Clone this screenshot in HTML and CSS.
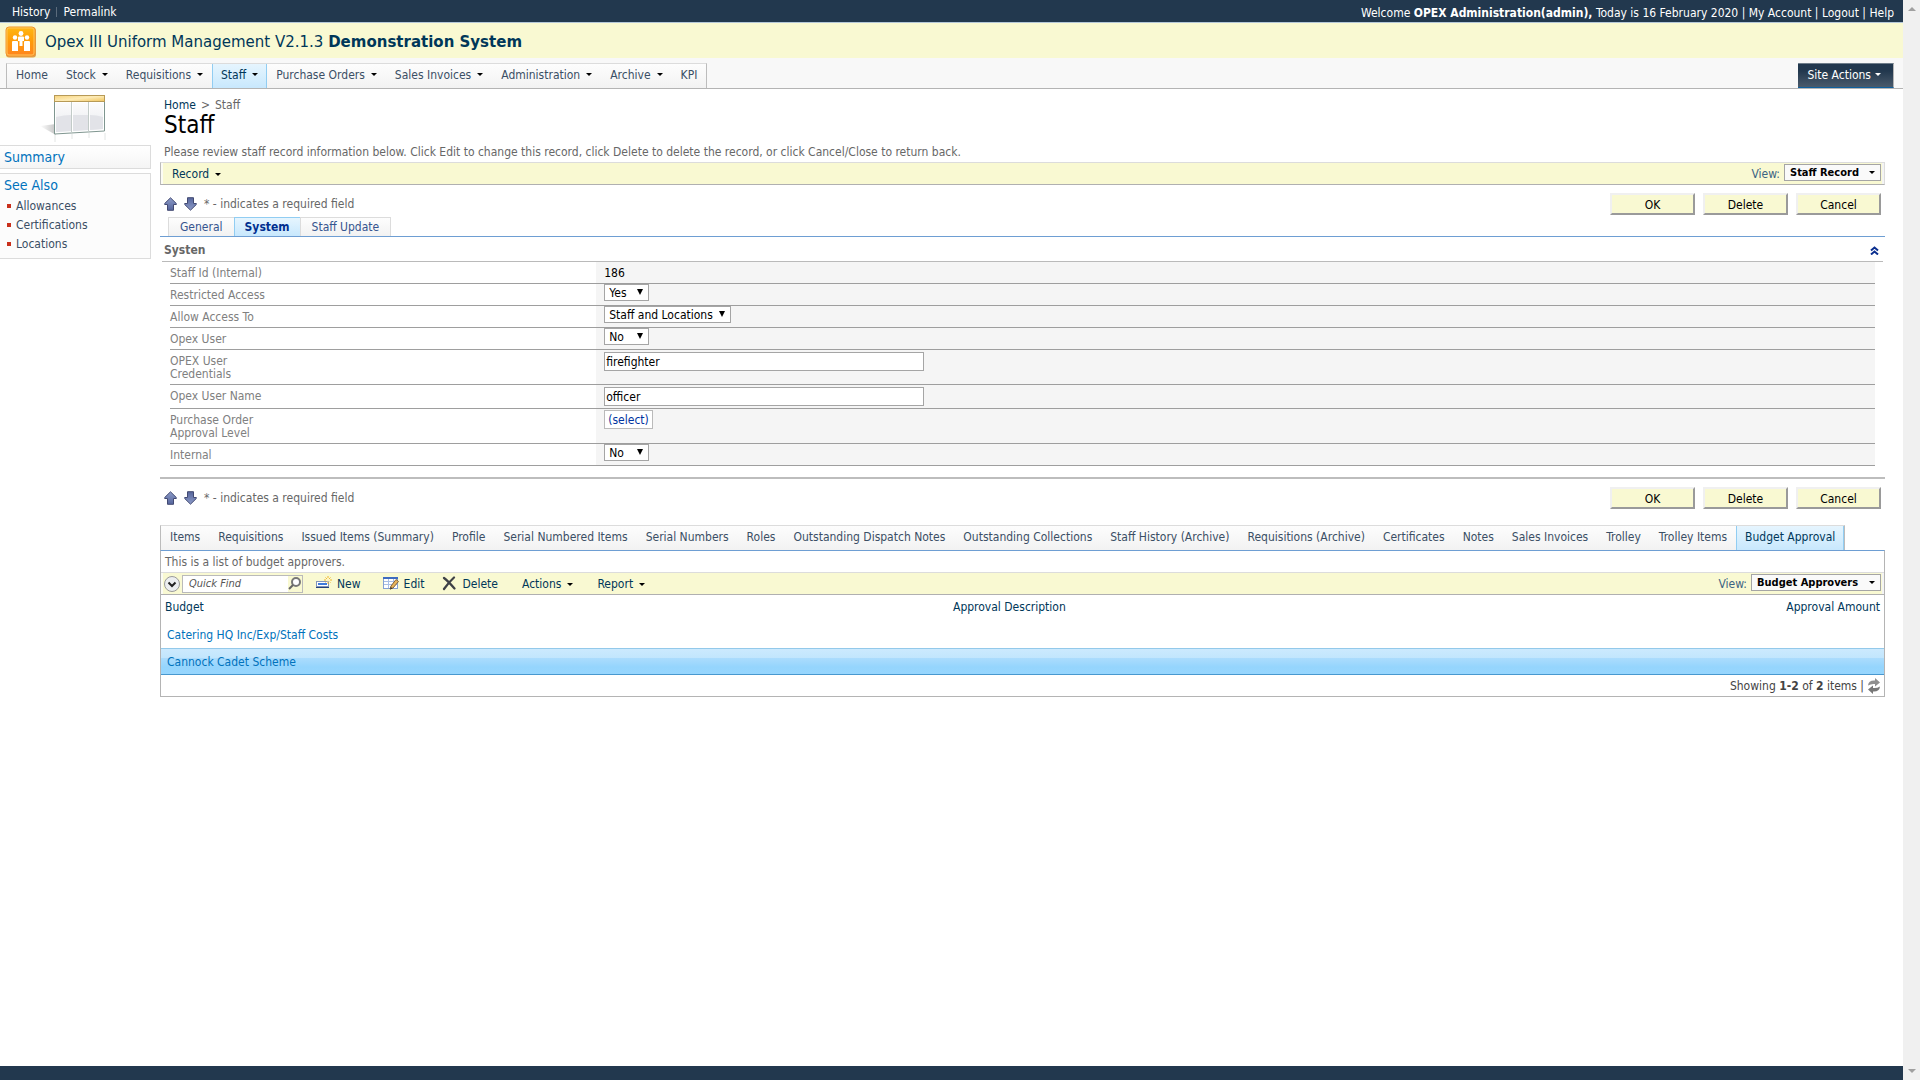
FILE: index.html
```html
<!DOCTYPE html>
<html lang="en">
<head>
    <meta charset="UTF-8">
    <meta name="viewport" content="width=device-width, initial-scale=1.0">
    <title>Staff - Opex III Uniform Management</title>
    <link rel="stylesheet" href="styles.css">
</head>
<body>

    <!-- Shared icons -->
    <svg class="defs" width="0" height="0">
        <defs>
            <linearGradient id="arrowFill" x1="0" y1="0" x2="0" y2="1">
                <stop offset="0" stop-color="#8c9bc8"/>
                <stop offset="1" stop-color="#56659c"/>
            </linearGradient>
            <symbol id="arrow" viewBox="0 0 14 14">
                <path d="M6.500 0.800 L12.300 6.500 V7.500 H9.500 V13.300 H3.500 V7.500 H0.700 V6.500 Z" fill="url(#arrowFill)" stroke="#434a72"/>
            </symbol>
        </defs>
    </svg>

    <div class="page">
        <div class="top-bar">
            <div class="top-left">
                <a href="#">History</a><span class="divider"></span><a href="#">Permalink</a>
            </div>
            <div class="top-right">
                Welcome <b>OPEX Administration(admin),</b> Today is 16 February 2020 | <a href="#">My Account</a> | <a href="#">Logout</a> | <a href="#">Help</a>
            </div>
        </div>

        <header class="header">
            <svg class="logo" width="32" height="32" viewBox="0 0 32 32">
                <defs>
                    <linearGradient id="logoFill" x1="0" y1="0" x2="0" y2="1">
                        <stop offset="0" stop-color="#ffb813"/>
                        <stop offset="0.5" stop-color="#ff9a08"/>
                        <stop offset="1" stop-color="#ff8420"/>
                    </linearGradient>
                </defs>
                <rect x="1" y="1.500" width="30" height="30" rx="3" fill="#dfa050"/>
                <rect x="1" y="1" width="29" height="29" rx="3" fill="url(#logoFill)" stroke="#f0932c"/>
                <rect x="2" y="2" width="27" height="27" rx="2" fill="none" stroke="#ffc65c"/>
                <g fill="#fff">
                    <circle cx="16" cy="7.500" r="2.400"/>
                    <circle cx="10" cy="11.500" r="2.200"/>
                    <circle cx="22" cy="11.500" r="2.200"/>
                    <path d="M13 11.500 Q13 10.500 14 10.500 H18 Q19 10.500 19 11.500 V15 H17.500 V20 H14.500 V15 H13 Z"/>
                    <path d="M7 16 Q7 15 8 15 H12 Q13 15 13 16 V25 H7 Z M19 16 Q19 15 20 15 H24 Q25 15 25 16 V25 H19 Z"/>
                </g>
            </svg>
            <div class="site-title">Opex III Uniform Management V2.1.3 <b>Demonstration System</b></div>
        </header>

        <nav class="nav">
            <ul class="menu">
                <li><a href="#">Home</a></li>
                <li><a href="#">Stock<i class="caret"></i></a></li>
                <li><a href="#">Requisitions<i class="caret"></i></a></li>
                <li class="active"><a href="#">Staff<i class="caret"></i></a></li>
                <li><a href="#">Purchase Orders<i class="caret"></i></a></li>
                <li><a href="#">Sales Invoices<i class="caret"></i></a></li>
                <li><a href="#">Administration<i class="caret"></i></a></li>
                <li><a href="#">Archive<i class="caret"></i></a></li>
                <li><a href="#">KPI</a></li>
            </ul>
            <button class="site-actions">Site Actions<i class="caret"></i></button>
        </nav>

        <div class="content">
            <aside class="sidebar">
                <svg class="page-icon" width="72" height="52" viewBox="0 0 72 52">
                    <defs>
                        <linearGradient id="gold" x1="0" y1="0" x2="1" y2="1">
                            <stop offset="0" stop-color="#f7d37c"/>
                            <stop offset="0.5" stop-color="#fdebb6"/>
                            <stop offset="1" stop-color="#f0c35c"/>
                        </linearGradient>
                        <linearGradient id="shade" x1="0" y1="0" x2="1" y2="0">
                            <stop offset="0" stop-color="#fff"/>
                            <stop offset="1" stop-color="#c4c4c4"/>
                        </linearGradient>
                        <linearGradient id="cell" x1="0" y1="0" x2="0" y2="1">
                            <stop offset="0" stop-color="#fbfbfc"/>
                            <stop offset="1" stop-color="#e9eaee"/>
                        </linearGradient>
                    </defs>
                    <path d="M0 33 L16 31 V42 Z" fill="url(#shade)"/>
                    <path d="M15 41 V49 M32 41 V46 M49 40 V45 M65 40 V47" stroke="#e2e5e4"/>
                    <path d="M14.500 2.500 H64.500 V38 L14.500 41 Z" fill="#fff" stroke="#7f9690"/>
                    <path d="M16 10 H31 V38 L16 39 Z M33 10 H48 V37 L33 38 Z M50 10 H63 V36 L50 37 Z" fill="url(#cell)"/>
                    <path d="M16 24 Q24 22 31 22 V38 L16 39 Z M33 22 H48 V37 L33 38 Z M50 22 Q57 22 63 24 V36 L50 37 Z" fill="#e2e3e8"/>
                    <path d="M31.500 9 V40 M48.500 9 V39" stroke="#c2cbc8"/>
                    <rect x="14.500" y="2.500" width="50" height="6" fill="url(#gold)" stroke="#b79a57"/>
                </svg>
                <div class="side-box">
                    <h3>Summary</h3>
                </div>
                <div class="side-box see-also">
                    <h3>See Also</h3>
                    <ul>
                        <li><a href="#">Allowances</a></li>
                        <li><a href="#">Certifications</a></li>
                        <li><a href="#">Locations</a></li>
                    </ul>
                </div>
            </aside>

            <main class="main">
                <div class="breadcrumb"><a href="#">Home</a><span>&gt;</span>Staff</div>
                <h1>Staff</h1>
                <p class="description">Please review staff record information below. Click Edit to change this record, click Delete to delete the record, or click Cancel/Close to return back.</p>

                <div class="action-bar">
                    <button class="tool">Record<i class="caret"></i></button>
                    <div class="view">
                        <label for="staff-view">View:</label>
                        <span class="view-select"><select id="staff-view"><option>Staff Record</option></select><i class="caret"></i></span>
                    </div>
                </div>

                <div class="form-buttons">
                    <div class="required">
                        <svg width="14" height="14"><use href="#arrow"/></svg>
                        <svg class="down" width="14" height="14"><use href="#arrow"/></svg>
                        <span>* - indicates a required field</span>
                    </div>
                    <div class="buttons">
                        <button>OK</button>
                        <button>Delete</button>
                        <button>Cancel</button>
                    </div>
                </div>

                <!-- Staff record form -->
                <ul class="form-tabs">
                    <li><a href="#">General</a></li>
                    <li class="active"><a href="#">System</a></li>
                    <li><a href="#">Staff Update</a></li>
                </ul>
                <div class="section-title">
                    <h2>Systen</h2>
                    <svg width="9" height="9" viewBox="0 0 9 9" fill="none" stroke="#0b2f8f" stroke-width="2">
                        <path d="M1 4.500 L4.500 1.500 L8 4.500 M1 8.500 L4.500 5.500 L8 8.500"/>
                    </svg>
                </div>

                <table class="fields">
                    <tr>
                        <th>Staff Id (Internal)</th>
                        <td class="plain">186</td>
                    </tr>
                    <tr>
                        <th><label for="restricted">Restricted Access</label></th>
                        <td><span class="drop"><select id="restricted" class="short"><option>Yes</option><option>No</option></select></span></td>
                    </tr>
                    <tr>
                        <th><label for="access">Allow Access To</label></th>
                        <td><span class="drop"><select id="access" class="long"><option>Staff and Locations</option></select></span></td>
                    </tr>
                    <tr>
                        <th><label for="opex-user">Opex User</label></th>
                        <td><span class="drop"><select id="opex-user" class="short"><option>No</option><option>Yes</option></select></span></td>
                    </tr>
                    <tr class="tall">
                        <th><label for="credentials">OPEX User<br>Credentials</label></th>
                        <td><input type="text" id="credentials" value="firefighter"></td>
                    </tr>
                    <tr class="medium">
                        <th><label for="user-name">Opex User Name</label></th>
                        <td><input type="text" id="user-name" value="officer"></td>
                    </tr>
                    <tr class="tall">
                        <th>Purchase Order<br>Approval Level</th>
                        <td><a class="lookup" href="#">(select)</a></td>
                    </tr>
                    <tr>
                        <th><label for="internal">Internal</label></th>
                        <td><span class="drop"><select id="internal" class="short"><option>No</option><option>Yes</option></select></span></td>
                    </tr>
                </table>

                <div class="form-buttons bottom">
                    <div class="required">
                        <svg width="14" height="14"><use href="#arrow"/></svg>
                        <svg class="down" width="14" height="14"><use href="#arrow"/></svg>
                        <span>* - indicates a required field</span>
                    </div>
                    <div class="buttons">
                        <button>OK</button>
                        <button>Delete</button>
                        <button>Cancel</button>
                    </div>
                </div>

                <!-- Child records -->
                <ul class="menu detail-tabs">
                    <li><a href="#">Items</a></li>
                    <li><a href="#">Requisitions</a></li>
                    <li><a href="#">Issued Items (Summary)</a></li>
                    <li><a href="#">Profile</a></li>
                    <li><a href="#">Serial Numbered Items</a></li>
                    <li><a href="#">Serial Numbers</a></li>
                    <li><a href="#">Roles</a></li>
                    <li><a href="#">Outstanding Dispatch Notes</a></li>
                    <li><a href="#">Outstanding Collections</a></li>
                    <li><a href="#">Staff History (Archive)</a></li>
                    <li><a href="#">Requisitions (Archive)</a></li>
                    <li><a href="#">Certificates</a></li>
                    <li><a href="#">Notes</a></li>
                    <li><a href="#">Sales Invoices</a></li>
                    <li><a href="#">Trolley</a></li>
                    <li><a href="#">Trolley Items</a></li>
                    <li class="active"><a href="#">Budget Approval</a></li>
                </ul>
                <section class="detail">
                    <p>This is a list of budget approvers.</p>
                    <div class="action-bar">
                        <button class="quick-toggle" aria-label="Quick find options">
                            <svg width="16" height="16" viewBox="0 0 16 16">
                                <circle cx="8" cy="8" r="7.500" fill="#eceef0" stroke="#9a9a9a"/>
                                <path d="M4.500 6.500 L8 10 L11.500 6.500" fill="none" stroke="#222" stroke-width="2"/>
                            </svg>
                        </button>
                        <div class="quick-find">
                            <input type="text" placeholder="Quick Find" aria-label="Quick Find">
                            <svg width="14" height="16" viewBox="0 0 14 16">
                                <rect width="14" height="16" fill="#f9f9d2"/>
                                <circle cx="8" cy="6" r="4" fill="#fff" stroke="#777" stroke-width="2"/>
                                <path d="M5 9 L1 13" stroke="#666" stroke-width="2"/>
                            </svg>
                        </div>
                        <button class="tool new">
                            <svg width="16" height="16" viewBox="0 0 16 16">
                                <rect x="0.500" y="5.500" width="12" height="5" fill="#fff" stroke="#8294b8"/>
                                <rect x="2" y="7" width="9" height="2" fill="#3f7bdb"/>
                                <path d="M0 11.500 H13" stroke="#24427c"/>
                                <path d="M12 0 V8 M8 4 H16 M9.500 1.500 L14.500 6.500 M14.500 1.500 L9.500 6.500" stroke="#f0b52a" stroke-dasharray="2 1"/>
                                <circle cx="12" cy="4" r="1.500" fill="#fff4bf"/>
                            </svg>New
                        </button>
                        <button class="tool edit">
                            <svg width="16" height="16" viewBox="0 0 16 16">
                                <rect x="0.500" y="1.500" width="14" height="11" fill="#fff" stroke="#86a2d4"/>
                                <path d="M0 2 H15" stroke="#3d6bc0" stroke-width="2"/>
                                <path d="M1 5.500 H14 M1 8.500 H14 M5.500 3 V12 M10.500 3 V12" stroke="#a9bfe6"/>
                                <path d="M7 13 L8 10 L13 3.500 L15.500 5.500 L10 12 Z" fill="#e8b45a" stroke="#80613a"/>
                                <path d="M7 13.500 L8 11 L9.500 12.500 Z" fill="#333"/>
                            </svg>Edit
                        </button>
                        <button class="tool delete">
                            <svg width="14" height="16" viewBox="0 0 14 16">
                                <path d="M2 2 Q6 5 12.500 12.500 M12 1.500 Q7 6 2 13" fill="none" stroke="#3e4147" stroke-width="2.200" stroke-linecap="round"/>
                            </svg>Delete
                        </button>
                        <button class="tool actions">Actions<i class="caret"></i></button>
                        <button class="tool report">Report<i class="caret"></i></button>
                        <div class="view">
                            <label for="budget-view">View:</label>
                            <span class="view-select"><select id="budget-view"><option>Budget Approvers</option></select><i class="caret"></i></span>
                        </div>
                    </div>
                    <table class="grid">
                        <thead>
                            <tr>
                                <th>Budget</th>
                                <th>Approval Description</th>
                                <th class="amount">Approval Amount</th>
                            </tr>
                        </thead>
                        <tbody>
                            <tr>
                                <td><a href="#">Catering HQ Inc/Exp/Staff Costs</a></td>
                                <td></td>
                                <td></td>
                            </tr>
                            <tr class="selected">
                                <td><a href="#">Cannock Cadet Scheme</a></td>
                                <td></td>
                                <td></td>
                            </tr>
                        </tbody>
                    </table>
                    <div class="pager">
                        <span>Showing <b>1-2</b> of <b>2</b> items |</span>
                        <button aria-label="Refresh">
                            <svg width="14" height="16" viewBox="0 0 14 16">
                                <path d="M1 7.500 Q1.500 2.500 7 2.500 H8 V0 L13 4.500 L8 8.500 V6 H6.500 Q3.500 6 1 7.500 Z" fill="#8f8f8f"/>
                                <path d="M13 8.500 Q12.500 13.500 7 13.500 H6 V16 L1 11.500 L6 7.500 V10 H7.500 Q10.500 10 13 8.500 Z" fill="#777"/>
                            </svg>
                        </button>
                    </div>
                </section>
            </main>
        </div>

        <footer class="footer"></footer>
    </div>

    <div class="scroll-track">
        <i class="scroll-up"></i>
        <i class="scroll-down"></i>
    </div>

</body>
</html>
```
FILE: styles.css
```css
* {
    margin: 0;
    padding: 0;
    box-sizing: border-box;
}

body {
    display: flex;
    min-height: 100vh;
    font: 12px/16px 'DejaVu Sans Condensed', 'DejaVu Sans', sans-serif;
    color: #676767;
    background: #fff;
}

a {
    color: inherit;
    text-decoration: none;
}

ul {
    list-style: none;
}

button, input, select {
    font: inherit;
    color: inherit;
}

button {
    border: none;
    background: none;
    cursor: pointer;
}

svg {
    display: block;
    flex: none;
}

.defs {
    position: absolute;
}

.page {
    flex: 1;
    min-width: 0;
    display: flex;
    flex-direction: column;
}

.caret {
    display: inline-block;
    flex: none;
    margin-left: 6px;
    border: 3px solid transparent;
    border-top-color: #000;
    border-bottom: none;
    vertical-align: 3px;
}

/* Top bar */
.top-bar {
    display: flex;
    justify-content: space-between;
    height: 23px;
    padding: 4px 9px 0 12px;
    background: #22384e;
    border-bottom: 1px solid #b5c8d8;
    color: #fff;
}

.top-left {
    display: flex;
}

.divider {
    width: 1px;
    height: 10px;
    margin: 3px 6px;
    background: #5b6b7c;
}

.top-right {
    padding-top: 1px;
}

/* Header */
.header {
    display: flex;
    align-items: center;
    height: 35px;
    padding: 2px 5px 0;
    gap: 8px;
    background: #f9f9d2;
}

.site-title {
    font: 15px/20px 'DejaVu Sans', sans-serif;
    color: #003759;
}

/* Main menu */
.nav {
    display: flex;
    justify-content: space-between;
    padding: 5px 9px 0 6px;
    background: #f8f8f8;
    border-bottom: 1px solid #b4b4b4;
}

.menu {
    display: flex;
    height: 25px;
    border: 1px solid #dcdcdc;
    border-left-color: #bcbcbc;
    border-right-color: #bcbcbc;
    border-bottom: none;
    background: linear-gradient(#fdfdfd, #f2f2f2);
    color: #3b4f65;
}

.menu li {
    padding: 3px 8px 0;
    border: solid transparent;
    border-width: 0 1px;
    white-space: nowrap;
}

.menu li.active {
    background: linear-gradient(#e6f5fe, #c8e8fd);
    border-color: #91cdf2;
    color: #003759;
}

.site-actions {
    height: 25px;
    padding: 0 12px 2px 9px;
    border: solid;
    border-width: 1px 1px 1px 0;
    border-color: #6f7d8a #b4b4b4 #0e5f9c;
    background: linear-gradient(#22384e 30%, #4a5a6b);
    color: #fff;
}

.site-actions .caret {
    margin-left: 4px;
    border-top-color: #fff;
}

.content {
    flex: 1;
    display: flex;
}

/* Sidebar */
.sidebar {
    width: 151px;
    padding-top: 2px;
}

.page-icon {
    margin: 2px 0 0 40px;
}

.side-box {
    height: 24px;
    padding: 3px 4px;
    border: 1px solid #dcdcdc;
    border-left: none;
    background: linear-gradient(#fff, #f5f5f5);
}

.side-box h3 {
    font-size: 14px;
    font-weight: normal;
    color: #0072bc;
}

.see-also {
    height: auto;
    margin-top: 4px;
    background: #fcfcfc;
}

.see-also ul {
    padding: 3px 4px 2px 3px;
}

.see-also li {
    display: flex;
    align-items: center;
    gap: 5px;
    height: 19px;
    color: #3b4f65;
}

.see-also li::before {
    content: '';
    width: 4px;
    height: 4px;
    background: #c9301c;
}

/* Page body */
.main {
    flex: 1;
    min-width: 0;
    padding: 8px 18px 0 9px;
}

.breadcrumb {
    padding-left: 4px;
}

.breadcrumb a {
    color: #003759;
}

.breadcrumb span {
    margin: 0 5px;
}

h1 {
    padding-left: 4px;
    font-size: 24px;
    line-height: 24px;
    font-weight: normal;
    color: #000;
}

.description {
    padding: 7px 4px 2px;
}

.action-bar {
    display: flex;
    align-items: center;
    height: 23px;
    padding: 0 3px;
    border: 1px solid #dcdcdc;
    border-left-color: #bcbcbc;
    border-bottom-color: #b0b0b0;
    background: #f9f9d2;
    box-shadow: inset 2px 0 #fcfcf4, inset -2px 0 #f4f4f4;
    color: #003759;
}

.tool {
    display: flex;
    align-items: center;
    padding: 1px 8px 0;
}

.view {
    display: flex;
    align-items: center;
    gap: 4px;
    margin-left: auto;
    color: #3c6383;
}

.view-select {
    position: relative;
    margin-bottom: 2px;
}

.view-select select {
    display: block;
    height: 17px;
    padding: 0 21px 1px 5px;
    border: 1px solid #a5a5a5;
    background: #fafafa;
    appearance: none;
    font-size: 11px;
    font-weight: bold;
    color: #000;
}

.view-select .caret {
    position: absolute;
    top: 7px;
    right: 6px;
    pointer-events: none;
}

.form-buttons {
    display: flex;
    justify-content: space-between;
    padding: 8px 4px 0;
}

.required {
    display: flex;
    align-items: center;
    gap: 6px;
    height: 22px;
}

.down {
    transform: scaleY(-1);
}

.buttons {
    display: flex;
    gap: 8px;
}

.buttons button {
    width: 85px;
    height: 22px;
    padding-top: 2px;
    border: 2px solid;
    border-color: #f0f0f0 #9a9a9a #9a9a9a #f0f0f0;
    background: #f9f9d2;
    color: #000;
}

/* Form tabs */
.form-tabs {
    display: flex;
    padding: 2px 8px 0;
    border-bottom: 1px solid #6e9ed3;
    color: #36558f;
}

.form-tabs li {
    height: 19px;
    padding: 1px 11px 0;
    border: 1px solid #dcdcdc;
    border-bottom: none;
    background: linear-gradient(#fdfdfd, #f2f2f2);
}

.form-tabs li.active {
    margin: 0 -1px;
    padding: 1px 10px 0;
    border-color: #91cdf2;
    background: linear-gradient(#e6f5fe, #c8e8fd);
    font-weight: bold;
    color: #002f8f;
}

.section-title {
    display: flex;
    align-items: center;
    justify-content: space-between;
    height: 25px;
    margin: 0 2px;
    padding: 2px 4px 0 2px;
    border-bottom: 1px solid #bababa;
}

.section-title h2 {
    font-size: 12px;
}

.fields {
    width: calc(100% - 20px);
    margin: 0 10px;
    border-spacing: 0;
    table-layout: fixed;
}

.fields tr {
    height: 22px;
}

.fields tr.medium {
    height: 24px;
}

.fields tr.tall {
    height: 35px;
}

.fields th, .fields td {
    border-bottom: 1px solid #9e9e9e;
    vertical-align: top;
}

.fields th {
    width: 25%;
    padding-top: 5px;
    text-align: left;
    font-weight: normal;
    line-height: 13px;
    color: #808080;
}

.fields td {
    padding: 0 8px;
    background: #f5f5f5;
    color: #000;
}

.fields td.plain {
    padding-top: 3px;
}

.drop {
    position: relative;
    display: inline-block;
    vertical-align: top;
}

.drop select {
    display: block;
    height: 17px;
    padding: 0 4px 1px;
    border: 1px solid #a5a5a5;
    background: #fff;
    appearance: none;
}

.drop .short {
    width: 45px;
}

.drop .long {
    width: 127px;
}

.drop::after {
    content: '';
    position: absolute;
    top: 5px;
    right: 6px;
    border: 3px solid transparent;
    border-top: 6px solid #000;
    border-bottom: none;
    pointer-events: none;
}

.fields input {
    display: block;
    width: 320px;
    height: 19px;
    margin-top: 2px;
    padding: 1px 1px 0;
    border: 1px solid #a5a5a5;
    background: #fff;
}

.lookup {
    display: inline-block;
    height: 19px;
    margin-top: 1px;
    padding: 1px 3px;
    border: 1px solid #bababa;
    background: #fff;
    color: #0033a0;
}

.form-buttons.bottom {
    margin-top: 11px;
    border-top: 2px solid #bdbdbd;
}

/* Child records */
.detail-tabs {
    width: fit-content;
    margin-top: 16px;
}

.detail {
    border: 1px solid #b4b4b4;
    border-top-color: #6e9ed3;
}

.detail p {
    padding: 3px 4px 2px;
}

.detail .action-bar {
    border-left: none;
    border-right: none;
}

.quick-toggle {
    margin-right: 2px;
}

.quick-find {
    display: flex;
    align-items: center;
    width: 121px;
    height: 18px;
    border: 1px solid #bababa;
    background: #fff;
}

.quick-find input {
    flex: 1;
    min-width: 0;
    padding-left: 6px;
    border: none;
    outline: none;
    background: none;
    font-size: 11px;
    font-style: italic;
}

.quick-find input::placeholder {
    color: #555;
    opacity: 1;
}

.new {
    padding-left: 13px;
    gap: 5px;
}

.edit {
    padding-left: 14px;
    gap: 5px;
}

.delete {
    padding-left: 10px;
    gap: 6px;
}

.actions, .report {
    padding-left: 16px;
}

.grid {
    width: 100%;
    border-spacing: 0;
}

.grid th {
    height: 26px;
    padding: 3px 4px 5px;
    text-align: left;
    font-weight: normal;
    color: #003759;
}

.grid th.amount {
    text-align: right;
}

.grid th:first-child {
    width: 788px;
}

.grid td {
    height: 27px;
    padding: 4px 6px 3px;
    color: #0072bc;
}

.grid .selected {
    background: linear-gradient(#cdeafe, #c2e6fd 36%, #abdcfd 38%, #95d5fd 70%, #97d6fe);
}

.grid .selected td {
    padding: 3px 6px;
    border-top: 1px solid #93c9ea;
    border-bottom: 1px solid #4898cf;
}

.pager {
    display: flex;
    align-items: center;
    justify-content: flex-end;
    gap: 3px;
    height: 21px;
    padding-right: 3px;
    color: #444;
}

.footer {
    height: 14px;
    background: #22384e;
}

.scroll-track {
    display: flex;
    flex-direction: column;
    justify-content: space-between;
    align-items: center;
    width: 17px;
    padding: 7px 0;
    background: #f0f0f0;
}

.scroll-up, .scroll-down {
    border: 4px solid transparent;
}

.scroll-up {
    border-top: none;
    border-bottom-color: #a0a0a0;
}

.scroll-down {
    border-bottom: none;
    border-top-color: #a0a0a0;
}
```
